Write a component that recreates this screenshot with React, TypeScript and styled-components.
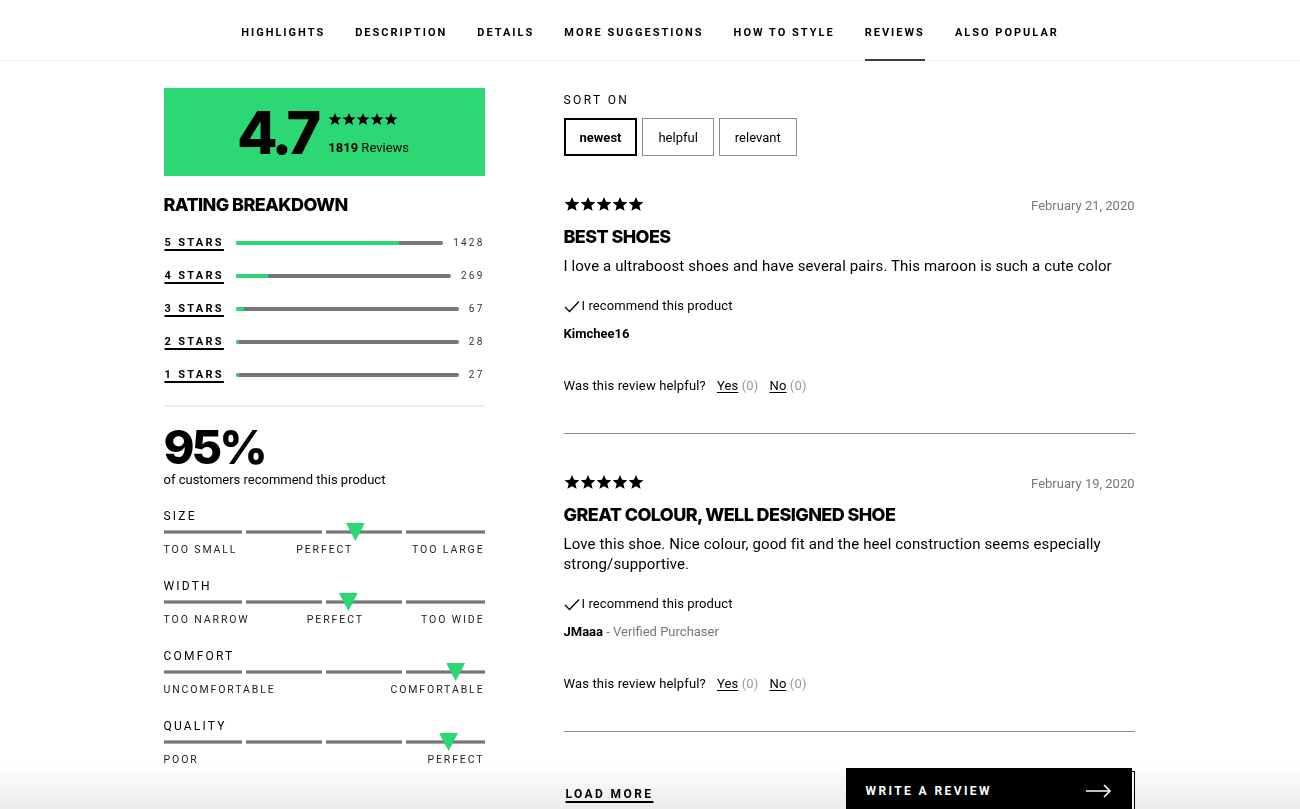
import styled, { createGlobalStyle } from "styled-components";

const GREEN = "#2bd873";
const GREY = "#767677";

const GlobalStyle = createGlobalStyle`
  html {
    background: #fff;
  }
  body {
    margin: 0;
    color: #000;
    font-family: Roboto, "Liberation Sans", Arial, sans-serif;
  }
  * { box-sizing: border-box; }
`;

interface IFit {
  name: string;
  labels: string[];
  value: number; // 0..1 along the scale
}

interface IReview {
  date: string;
  title: string;
  text: string;
  author: string;
  verified?: boolean;
}

const tabs = [
  "HIGHLIGHTS",
  "DESCRIPTION",
  "DETAILS",
  "MORE SUGGESTIONS",
  "HOW TO STYLE",
  "REVIEWS",
  "ALSO POPULAR",
];

const breakdown = [
  { stars: 5, count: 1428 },
  { stars: 4, count: 269 },
  { stars: 3, count: 67 },
  { stars: 2, count: 28 },
  { stars: 1, count: 27 },
];
const total = 1819;

const fits: IFit[] = [
  { name: "SIZE", labels: ["TOO SMALL", "PERFECT", "TOO LARGE"], value: 0.598 },
  { name: "WIDTH", labels: ["TOO NARROW", "PERFECT", "TOO WIDE"], value: 0.576 },
  { name: "COMFORT", labels: ["UNCOMFORTABLE", "COMFORTABLE"], value: 0.91 },
  { name: "QUALITY", labels: ["POOR", "PERFECT"], value: 0.888 },
];

const reviews: IReview[] = [
  {
    date: "February 21, 2020",
    title: "BEST SHOES",
    text: "I love a ultraboost shoes and have several pairs. This maroon is such a cute color",
    author: "Kimchee16",
  },
  {
    date: "February 19, 2020",
    title: "GREAT COLOUR, WELL DESIGNED SHOE",
    text: "Love this shoe. Nice colour, good fit and the heel construction seems especially strong/supportive.",
    author: "JMaaa",
    verified: true,
  },
];

function Stars({ size }: { size: number }): JSX.Element {
  return (
    <StarRow>
      {[0, 1, 2, 3, 4].map((i) => (
        <svg key={i} width={size} height={size} viewBox="0 0 24 24">
          <path
            d="M12 1.5l3.1 7.3 7.9.6-6 5.2 1.9 7.7L12 18.2l-6.9 4.1 1.9-7.7-6-5.2 7.9-.6z"
            fill="#000"
          />
        </svg>
      ))}
    </StarRow>
  );
}

function App(): JSX.Element {
  return (
    <>
      <GlobalStyle />
      <BottomFade />
      <Nav>
        {tabs.map((tab) => (
          <NavItem key={tab} $active={tab === "REVIEWS"}>
            {tab}
          </NavItem>
        ))}
      </Nav>

      <Main>
        <Sidebar>
          <ScoreBox>
            <Score>4.7</Score>
            <ScoreSide>
              <Stars size={14} />
              <ReviewCount>
                <b>1819</b> Reviews
              </ReviewCount>
            </ScoreSide>
          </ScoreBox>

          <Heading>RATING BREAKDOWN</Heading>
          <Breakdown>
            {breakdown.map((row) => (
              <BreakdownRow key={row.stars}>
                <StarLabel>{row.stars} STARS</StarLabel>
                <Bar>
                  <BarFill style={{ width: `${(row.count / total) * 100}%` }} />
                </Bar>
                <Count>{row.count}</Count>
              </BreakdownRow>
            ))}
          </Breakdown>

          <Separator />

          <Percent>95%</Percent>
          <PercentText>of customers recommend this product</PercentText>

          {fits.map((fit) => (
            <FitBlock key={fit.name}>
              <FitName>{fit.name}</FitName>
              <FitScale>
                <Segment />
                <Segment />
                <Segment />
                <Segment />
                <Marker style={{ left: `${fit.value * 100}%` }} />
              </FitScale>
              <FitLabels>
                {fit.labels.map((label) => (
                  <span key={label}>{label}</span>
                ))}
              </FitLabels>
            </FitBlock>
          ))}
        </Sidebar>

        <Content>
          <SortLabel>SORT ON</SortLabel>
          <SortGroup>
            <SortButton $active>newest</SortButton>
            <SortButton>helpful</SortButton>
            <SortButton>relevant</SortButton>
          </SortGroup>

          {reviews.map((review) => (
            <Review key={review.title}>
              <ReviewHeader>
                <Stars size={16} />
                <DateText>{review.date}</DateText>
              </ReviewHeader>
              <ReviewTitle>{review.title}</ReviewTitle>
              <ReviewBody>{review.text}</ReviewBody>
              <Recommend>
                <svg width="16" height="13" viewBox="0 0 16 13">
                  <polyline
                    points="1,7 5.5,11.5 15,1.5"
                    fill="none"
                    stroke="#000"
                    strokeWidth="1.3"
                  />
                </svg>
                I recommend this product
              </Recommend>
              <Author>
                <b>{review.author}</b>
                {review.verified && <Verified> - Verified Purchaser</Verified>}
              </Author>
              <Helpful>
                Was this review helpful?
                <Vote>
                  <u>Yes</u> <Muted>(0)</Muted>
                </Vote>
                <Vote>
                  <u>No</u> <Muted>(0)</Muted>
                </Vote>
              </Helpful>
              <Divider />
            </Review>
          ))}

          <Footer>
            <LoadMore>LOAD MORE</LoadMore>
            <WriteButton>
              WRITE A REVIEW
              <svg width="26" height="14" viewBox="0 0 26 14">
                <path d="M0 7h24M18 1l6 6-6 6" fill="none" stroke="#fff" strokeWidth="1.6" />
              </svg>
            </WriteButton>
          </Footer>
        </Content>
      </Main>
    </>
  );
}

export default App;

const BottomFade = styled.div`
  position: fixed;
  left: 0;
  right: 0;
  bottom: 0;
  height: 46px;
  z-index: -1;
  background: linear-gradient(rgba(0, 0, 0, 0), rgba(0, 0, 0, 0.075));
  pointer-events: none;
`;

const Nav = styled.nav`
  display: flex;
  justify-content: center;
  gap: 30px;
  height: 61px;
  border-bottom: 1px solid #ebedee;
`;

const NavItem = styled.div<{ $active?: boolean }>`
  display: flex;
  align-items: center;
  padding-top: 5px;
  font-size: 11px;
  font-weight: 700;
  letter-spacing: 2px;
  border-bottom: 2px solid ${({ $active }) => ($active ? "#3d3d3d" : "transparent")};
  margin-bottom: -1px;
`;

const Main = styled.main`
  display: flex;
  justify-content: center;
  gap: 79px;
  padding: 27px 2px 0 0;
`;

const Sidebar = styled.aside`
  width: 321px;
  display: flex;
  flex-direction: column;
`;

const ScoreBox = styled.div`
  height: 88px;
  background: ${GREEN};
  display: flex;
  align-items: center;
  justify-content: center;
  gap: 11px;
  padding-right: 2px;
`;

const Score = styled.div`
  font-family: Inter, Roboto, sans-serif;
  font-size: 59px;
  font-weight: 800;
  letter-spacing: -4px;
  line-height: 1;
`;

const ScoreSide = styled.div`
  display: flex;
  flex-direction: column;
  gap: 14px;
  padding-top: 2px;
`;

const StarRow = styled.div`
  display: flex;
  gap: 0;
`;

const ReviewCount = styled.div`
  font-size: 13px;
  b {
    font-weight: 700;
  }
`;

const Heading = styled.h2`
  margin: 18px 0 0;
  font-family: Inter, Roboto, sans-serif;
  font-size: 18px;
  font-weight: 800;
  letter-spacing: -0.6px;
  line-height: 22px;
`;

const Breakdown = styled.div`
  margin-top: 10px;
  display: flex;
  flex-direction: column;
`;

const BreakdownRow = styled.div`
  display: flex;
  align-items: center;
  height: 33px;
`;

const StarLabel = styled.span`
  font-size: 11px;
  font-weight: 700;
  letter-spacing: 2.3px;
  text-decoration: underline;
  text-underline-offset: 3px;
  text-decoration-thickness: 1.5px;
  margin-right: 12px;
  padding-left: 1px;
  white-space: nowrap;
`;

const Bar = styled.div`
  flex: 1;
  height: 4px;
  border-radius: 2px;
  background: ${GREY};
  overflow: hidden;
  margin-right: 10px;
`;

const BarFill = styled.div`
  height: 100%;
  background: ${GREEN};
`;

const Count = styled.span`
  font-size: 10px;
  letter-spacing: 2.2px;
  color: #333;
`;

const Separator = styled.hr`
  margin: 14px 0 0;
  border: none;
  border-top: 2px solid #eceeef;
`;

const Percent = styled.div`
  margin-top: 15px;
  font-family: Inter, Roboto, sans-serif;
  font-size: 47px;
  font-weight: 800;
  letter-spacing: -3px;
  line-height: 50px;
`;

const PercentText = styled.div`
  font-size: 13px;
  line-height: 18px;
  margin-top: -1px;
`;

const FitBlock = styled.div`
  margin-top: 19px;
  display: flex;
  flex-direction: column;

  & + & {
    margin-top: 21px;
  }
`;

const FitName = styled.div`
  font-size: 12px;
  letter-spacing: 2.2px;
  line-height: 16px;
`;

const FitScale = styled.div`
  position: relative;
  margin-top: 6px;
  display: grid;
  grid-template-columns: 78px 76px 76px 1fr;
  gap: 4px;
`;

const Segment = styled.div`
  height: 4px;
  background: ${GREY};
  border-top: 1px solid #aaa;
  border-bottom: 1px solid #aaa;
`;

const Marker = styled.div`
  position: absolute;
  top: -7px;
  width: 19px;
  height: 18px;
  transform: translateX(-50%);
  background: ${GREEN};
  clip-path: polygon(0 0, 100% 0, 50% 100%);
`;

const FitLabels = styled.div`
  margin-top: 9px;
  display: flex;
  justify-content: space-between;
  font-size: 10.5px;
  letter-spacing: 1.9px;
  line-height: 14px;
  color: #222;
`;

const Content = styled.section`
  width: 571px;
  display: flex;
  flex-direction: column;
`;

const SortLabel = styled.div`
  margin-top: 3px;
  font-size: 12px;
  letter-spacing: 2.4px;
  line-height: 18px;
`;

const SortGroup = styled.div`
  display: flex;
  gap: 5px;
  margin-top: 9px;
`;

const SortButton = styled.button<{ $active?: boolean }>`
  height: 38px;
  background: #fff;
  font-family: Roboto, sans-serif;
  font-size: 13px;
  color: #000;
  font-weight: ${({ $active }) => ($active ? 700 : 400)};
  border: ${({ $active }) => ($active ? "2px solid #000" : "1px solid #8c8c8c")};
  padding: ${({ $active }) => ($active ? "0 14px" : "0 15px")};
`;

const Review = styled.article`
  padding-top: 38px;
  display: flex;
  flex-direction: column;
`;

const ReviewHeader = styled.div`
  display: flex;
  justify-content: space-between;
  align-items: center;
  height: 20px;
`;

const DateText = styled.span`
  font-size: 13px;
  color: ${GREY};
  padding-top: 3px;
`;

const ReviewTitle = styled.h3`
  margin: 12px 0 0;
  font-family: Inter, Roboto, sans-serif;
  font-size: 18px;
  font-weight: 800;
  letter-spacing: -0.6px;
  line-height: 22px;
`;

const ReviewBody = styled.p`
  margin: 8px 0 0;
  font-size: 15px;
  line-height: 20px;
  letter-spacing: 0.12px;
  padding-right: 10px;
`;

const Recommend = styled.div`
  margin-top: 20px;
  display: flex;
  align-items: center;
  gap: 2px;
  font-size: 13px;
  line-height: 20px;
  letter-spacing: 0.1px;
`;

const Author = styled.div`
  margin-top: 8px;
  font-size: 13px;
  line-height: 20px;
  b {
    font-weight: 700;
  }
`;

const Verified = styled.span`
  color: ${GREY};
`;

const Helpful = styled.div`
  margin-top: 32px;
  display: flex;
  gap: 11px;
  font-size: 13px;
  line-height: 20px;
  letter-spacing: 0.15px;
`;

const Vote = styled.span`
  u {
    text-underline-offset: 2px;
  }
`;

const Muted = styled.span`
  color: #9a9a9a;
`;

const Divider = styled.hr`
  margin: 37px 0 0;
  border: none;
  border-top: 1px solid #8c8c8c;
`;

const Footer = styled.div`
  margin-top: 36px;
  display: flex;
  justify-content: space-between;
  align-items: flex-start;
`;

const LoadMore = styled.span`
  margin-top: 19px;
  padding-left: 2px;
  font-size: 12px;
  font-weight: 700;
  letter-spacing: 2.4px;
  text-decoration: underline;
  text-underline-offset: 3px;
  text-decoration-thickness: 1.5px;
`;

const WriteButton = styled.button`
  position: relative;
  width: 286px;
  height: 50px;
  margin-right: 3px;
  display: flex;
  align-items: center;
  justify-content: space-between;
  padding: 0 20px 4px 20px;
  background: #000;
  border: none;
  color: #fff;
  font-family: Roboto, sans-serif;
  font-size: 12px;
  font-weight: 700;
  letter-spacing: 2.4px;

  &::after {
    content: "";
    position: absolute;
    top: 3px;
    left: 3px;
    right: -3px;
    bottom: -3px;
    border: 1px solid #000;
    pointer-events: none;
  }
`;
